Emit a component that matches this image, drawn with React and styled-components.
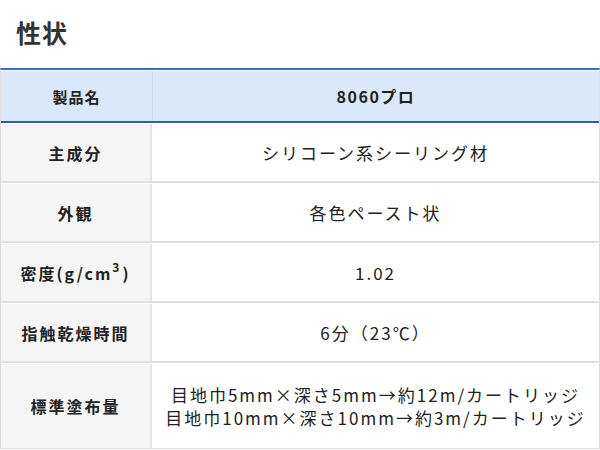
import React from 'react';
import styled, { createGlobalStyle } from 'styled-components';

const GlobalStyle = createGlobalStyle`
    body {
        margin: 0;
        background: #fff;
        font-family: "Noto Sans CJK JP", "Noto Sans", sans-serif;
        color: #222;
    }
`;

const rows = [
    { label: '主成分', value: ['シリコーン系シーリング材'] },
    { label: '外観', value: ['各色ペースト状'] },
    { label: <>密度(g/cm<Sup>3</Sup>)</>, value: ['1.02'] },
    { label: '指触乾燥時間', value: ['6分（23℃）'] },
    {
        label: '標準塗布量',
        value: [
            '目地巾5mm×深さ5mm→約12m/カートリッジ',
            '目地巾10mm×深さ10mm→約3m/カートリッジ',
        ],
        tall: true,
    },
];

const App = () => {
    return (
        <>
            <GlobalStyle />
            <Page>
                <Heading>性状</Heading>
                <Table>
                    <HeadRow>
                        <HeadCell>製品名</HeadCell>
                        <HeadCell wide>8060プロ</HeadCell>
                    </HeadRow>
                    {rows.map((row, i) => (
                        <Row key={i} tall={row.tall}>
                            <Label>{row.label}</Label>
                            <Value>
                                {row.value.map((line) => (
                                    <div key={line}>{line}</div>
                                ))}
                            </Value>
                        </Row>
                    ))}
                </Table>
            </Page>
        </>
    );
};

export default App;

function Sup({ children }) {
    return <SupText>{children}</SupText>;
}

const Page = styled.div`
    width: 600px;
`;

const Heading = styled.h2`
    margin: 0;
    padding: 16px 0 0 16px;
    height: 68px;
    box-sizing: border-box;
    font-size: 25px;
    line-height: 32px;
    font-weight: 700;
    letter-spacing: 1px;
    color: #333;
`;

const Table = styled.div`
    width: 598px;
    border-top: 2px solid #3f6db3;
    border-left: 1px solid #ddd;
    border-right: 1px solid #ddd;
    border-bottom: 1px solid #ddd;
`;

const HeadRow = styled.div`
    display: grid;
    grid-template-columns: 151px 1fr;
    height: 50px;
    background: #dae8fb;
    border-top: 1px solid #fff;
    border-bottom: 2px solid #2f5fa6;
`;

const HeadCell = styled.div`
    display: flex;
    align-items: center;
    justify-content: center;
    font-size: ${(props) => (props.wide ? '16px' : '15px')};
    font-weight: 700;
    letter-spacing: ${(props) => (props.wide ? '1.5px' : '1px')};
    color: #222;
    border-left: ${(props) => (props.wide ? '1px solid #c9d8ec' : 'none')};
`;

const Row = styled.div`
    display: grid;
    grid-template-columns: 151px 1fr;
    height: ${(props) => (props.tall ? '84px' : '57px')};
    border-top: 1px solid #fff;
    border-bottom: 2px solid #e0e0e0;

    &:last-child {
        border-bottom: none;
    }
`;

const Label = styled.div`
    display: flex;
    align-items: center;
    justify-content: center;
    background: #f5f5f5;
    border-right: 2px solid #e6e6e6;
    font-size: 16px;
    font-weight: 700;
    letter-spacing: 2px;
    color: #222;
`;

const SupText = styled.span`
    display: inline-block;
    font-size: 12px;
    line-height: 1;
    transform: translateY(-6px);
    margin-right: 1px;
`;

const Value = styled.div`
    display: flex;
    flex-direction: column;
    align-items: center;
    justify-content: center;
    font-size: 17px;
    line-height: 23px;
    letter-spacing: 2px;
    color: #222;
`;
